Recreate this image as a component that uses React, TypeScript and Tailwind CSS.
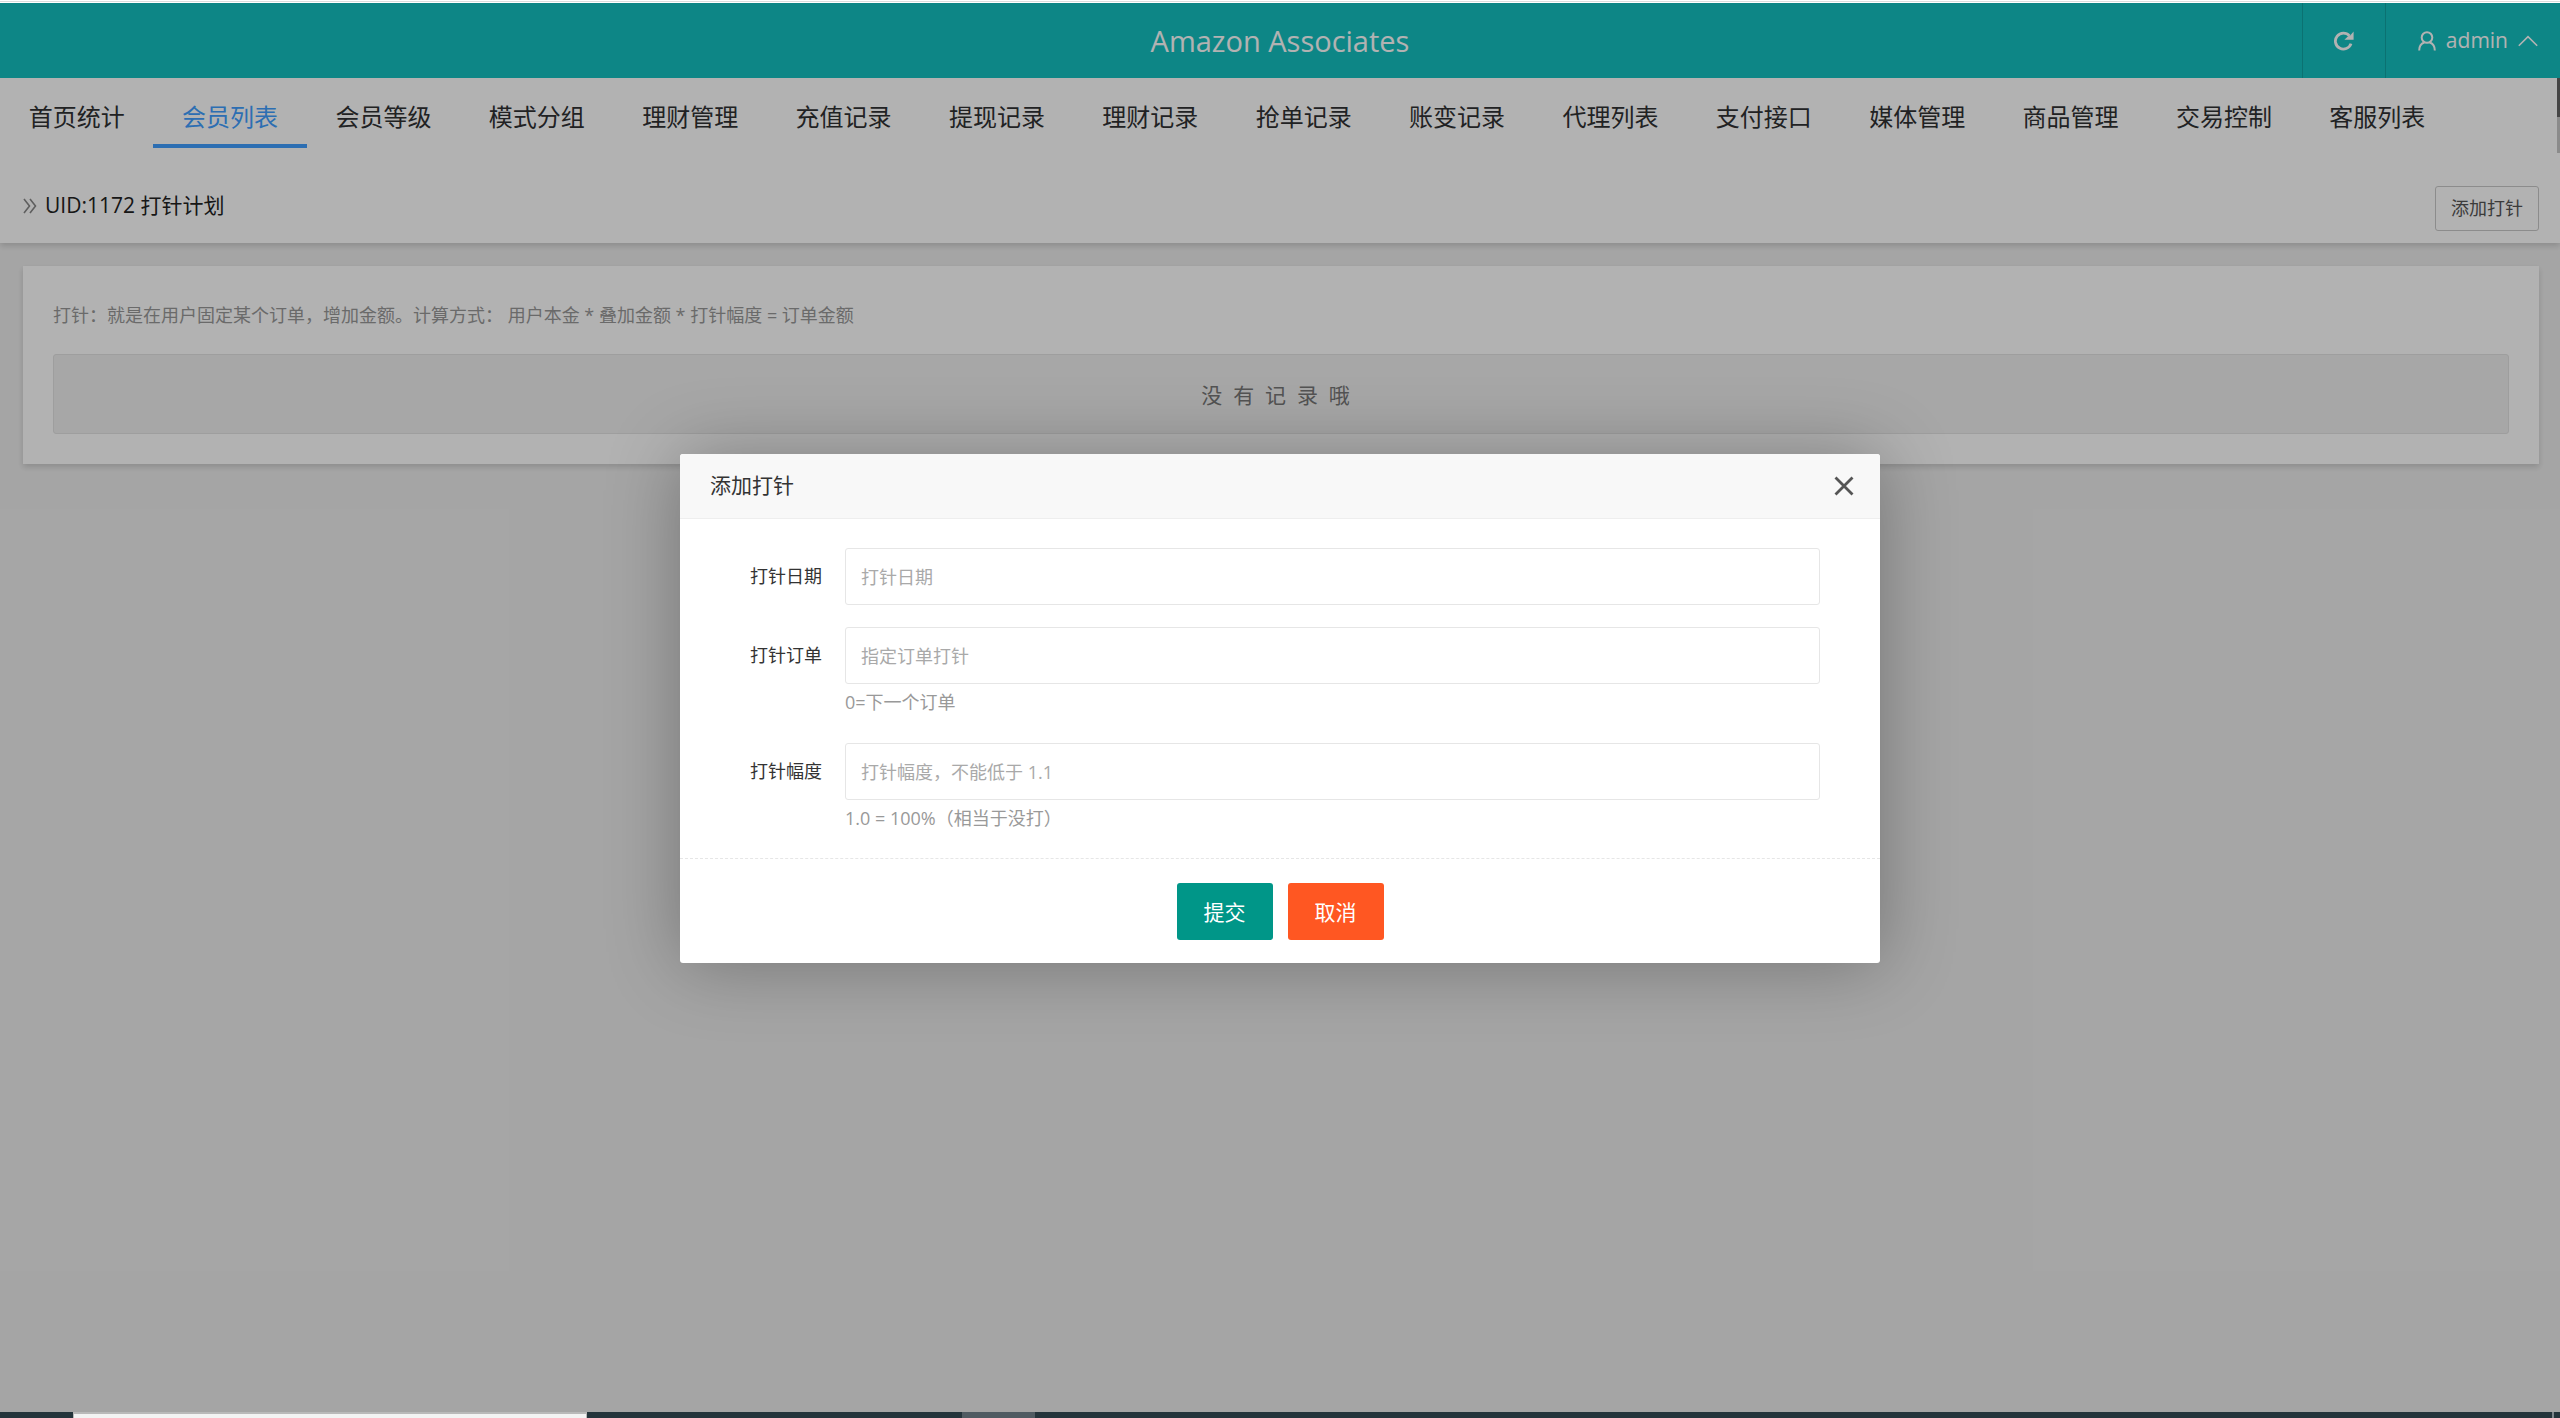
import { useState } from "react";

const navItems = [
  "首页统计",
  "会员列表",
  "会员等级",
  "模式分组",
  "理财管理",
  "充值记录",
  "提现记录",
  "理财记录",
  "抢单记录",
  "账变记录",
  "代理列表",
  "支付接口",
  "媒体管理",
  "商品管理",
  "交易控制",
  "客服列表",
];

const fields = [
  { id: "date", label: "打针日期", placeholder: "打针日期", help: "" },
  { id: "order", label: "打针订单", placeholder: "指定订单打针", help: "0=下一个订单" },
  { id: "range", label: "打针幅度", placeholder: "打针幅度，不能低于 1.1", help: "1.0 = 100%（相当于没打）" },
];

function RefreshIcon() {
  return (
    <svg width="20" height="20" viewBox="0 0 20 20" fill="none">
      <path d="M15.5 4.9A8 8 0 1 0 17 12.600" stroke="currentColor" strokeWidth="2.8" />
      <path d="M19.6 0.6v8.200h-9.200l3.400-3.400 2.400-0.800z" fill="currentColor" />
    </svg>
  );
}

function UserIcon() {
  return (
    <svg width="18" height="20" viewBox="0 0 18 20" fill="none" stroke="currentColor" strokeWidth="2">
      <circle cx="9" cy="6.5" r="5.3" />
      <path d="M1.2 19.500c0-4 2-7 5-8M16.800 19.500c0-4-2-7-5-8" />
    </svg>
  );
}

function ChevronIcon() {
  return (
    <svg width="20" height="12" viewBox="0 0 20 12" fill="none" stroke="currentColor" strokeWidth="1.6">
      <path d="M0.800 10.800L10 1.600l9.200 9.200" />
    </svg>
  );
}

function TopBar() {
  return (
    <header className="grid h-[75px] grid-cols-[1fr_auto_1fr] bg-[#14c1c1] text-white">
      <h1 className="col-start-2 self-center text-[29px] leading-[36px]">Amazon Associates</h1>
      <div className="flex justify-end">
        <button aria-label="刷新" className="flex w-[83px] items-center justify-center border-l border-black/15">
          <RefreshIcon />
        </button>
        <button className="flex w-[175px] items-center justify-end gap-[10px] border-l border-black/15 pr-[22px] text-[21px] font-medium">
          <UserIcon />
          <span>admin</span>
          <ChevronIcon />
        </button>
      </div>
    </header>
  );
}

function NavTabs() {
  return (
    <div className="relative flex h-[75px] bg-white">
      <nav className="grid h-[70px] flex-1 grid-cols-16 pr-[103px]">
        {navItems.map((item) => (
          <a
            key={item}
            href="#"
            className={
              item === "会员列表"
                ? "flex items-center justify-center border-b-4 border-[#409eff] pt-3 text-[24px] whitespace-nowrap text-[#409eff]"
                : "flex items-center justify-center border-b-4 border-transparent pt-3 text-[24px] whitespace-nowrap text-[#303133]"
            }
          >
            {item}
          </a>
        ))}
      </nav>
      <div className="w-[3px] bg-[#c8c8c8]">
        <div className="h-[39px] bg-[#646464]" />
      </div>
    </div>
  );
}

function Dialog({ onClose }: { onClose: () => void }) {
  return (
    <div
      role="dialog"
      aria-label="添加打针"
      className="w-[1200px] max-w-full rounded-[3px] bg-white shadow-[1px_1px_75px_rgba(0,0,0,0.3)]"
    >
      <div className="flex h-[65px] items-center justify-between rounded-t-[3px] border-b border-[#eee] bg-[#f8f8f8] pr-[26px] pl-[30px]">
        <h2 className="text-[21px] text-[#333]">添加打针</h2>
        <button aria-label="关闭" className="text-[#555]" onClick={onClose}>
          <svg width="20" height="20" viewBox="0 0 20 20" stroke="currentColor" strokeWidth="2.8">
            <path d="M1.500 1.500l17 17M18.500 1.500l-17 17" />
          </svg>
        </button>
      </div>
      <form onSubmit={(e) => e.preventDefault()}>
        <div className="pt-[29px] pr-[60px] pb-[21px] pl-[60px]">
          {fields.map((field) => (
            <div key={field.id} className="mb-[22px] flex last:mb-0">
              <label htmlFor={field.id} className="w-[105px] pr-[23px] text-right text-[18px] leading-[57px] text-[#333]">
                {field.label}
              </label>
              <div className="flex-1">
                <input
                  id={field.id}
                  type="text"
                  placeholder={field.placeholder}
                  className="block h-[57px] w-full rounded-[3px] border border-[#e6e6e6] px-[15px] text-[18px] outline-none placeholder:text-[#a9a9a9]"
                />
                {field.help && <p className="h-[37px] text-[18px] leading-[37px] text-[#999]">{field.help}</p>}
              </div>
            </div>
          ))}
        </div>
        <div className="flex justify-center gap-[15px] border-t border-dashed border-[#e6e6e6] pt-[24px] pb-[23px]">
          <button type="submit" className="h-[57px] w-[96px] rounded-[3px] bg-[#009688] pt-[2px] text-[21px] text-white">
            提交
          </button>
          <button
            type="button"
            className="h-[57px] w-[96px] rounded-[3px] bg-[#ff5722] pt-[2px] text-[21px] text-white"
            onClick={onClose}
          >
            取消
          </button>
        </div>
      </form>
    </div>
  );
}

export default function App() {
  const [open, setOpen] = useState(true);

  return (
    <div className="flex min-h-screen flex-col bg-[#ededed] font-['Open_Sans','Noto_Sans_CJK_SC',sans-serif]">
      <div className="h-[3px] border-y border-white bg-[#dcdcdc]" />
      <div className="relative flex flex-1 flex-col">
        <TopBar />
        <NavTabs />
        <section className="flex h-[90px] items-center justify-between bg-white pt-5 pr-[21px] pl-[23px] shadow-[0_3px_6px_rgba(0,0,0,0.15)]">
          <h2 className="flex items-center gap-[8px] pb-1 text-[21px] text-[#222]">
            <svg width="14" height="18" viewBox="0 0 14 18" fill="none" stroke="#888" strokeWidth="1.600">
              <path d="M1 2l5.500 7L1 16M7 2l5.500 7L7 16" />
            </svg>
            UID:1172 打针计划
          </h2>
          <button
            className="h-[45px] w-[104px] rounded-[3px] border border-[#c9c9c9] bg-white text-[18px] text-[#555]"
            onClick={() => setOpen(true)}
          >
            添加打针
          </button>
        </section>
        <main className="mt-[23px] mr-[21px] ml-[23px] bg-white p-[30px] shadow-[0_3px_6px_rgba(0,0,0,0.15)]">
          <p className="h-[58px] text-[18px] leading-[39px] text-[#999]">
            打针：就是在用户固定某个订单，增加金额。计算方式： 用户本金 * 叠加金额 * 打针幅度 = 订单金额
          </p>
          <p className="h-[80px] rounded-[3px] border border-[#e3e3e3] bg-[#f0f0f0] text-center text-[21px] leading-[80px] whitespace-pre text-[#777]">
            {"没  有  记  录  哦  "}
          </p>
        </main>
        {open && (
          <div className="absolute inset-0 flex items-center justify-center bg-black/30 pt-[2px]">
            <Dialog onClose={() => setOpen(false)} />
          </div>
        )}
      </div>
      <footer className="flex h-[6px] bg-[#24343b]">
        <div className="ml-[73px] w-[514px] border-x border-t-2 border-[#b9b9b9] bg-[#f3f3f3]" />
        <div className="ml-[375px] w-[73px] bg-[#505b62]" />
        <div className="mr-[6px] ml-auto w-[2px] bg-[#7d868b]" />
      </footer>
    </div>
  );
}
